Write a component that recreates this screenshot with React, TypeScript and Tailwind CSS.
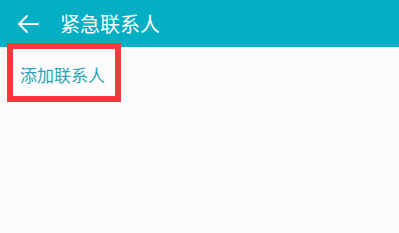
import React from "react";

export default function App() {
  return (
    <div
      className="relative w-[399px] h-[233px] overflow-hidden bg-[#fcfcfc]"
      style={{ fontFamily: '"Noto Sans CJK SC", "Noto Sans", sans-serif' }}
    >
      <div className="flex items-center h-[47px] bg-[#04aec3] pl-[17px]">
        <svg width="22" height="20" viewBox="0 0 22 20" fill="none" stroke="#ffffff" strokeWidth="1.8" strokeLinecap="round" strokeLinejoin="round">
          <path d="M21 10H2" />
          <path d="M10 2L2 10l8 8" />
        </svg>
        <span className="ml-[21px] text-[20px] leading-none text-white">紧急联系人</span>
      </div>
      <div className="pl-[20px] pt-[16px]">
        <span className="text-[17px] leading-none text-[#2aa6b8]">添加联系人</span>
      </div>
      <div className="absolute left-[7px] top-[43px] w-[114px] h-[59px] border-[6px] border-[#f23a3c]" />
    </div>
  );
}
